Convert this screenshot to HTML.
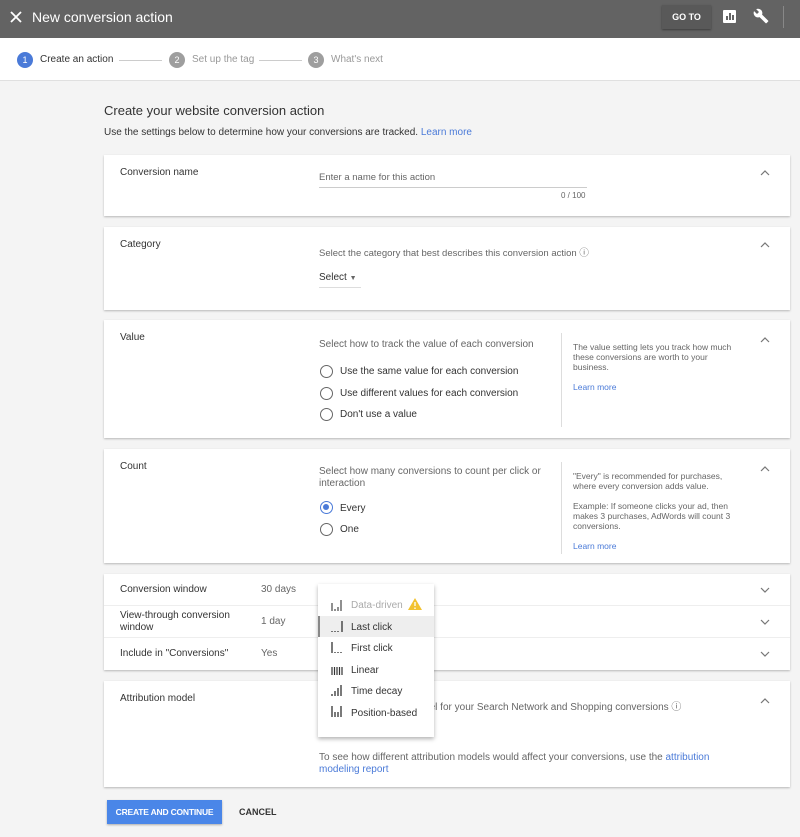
<!DOCTYPE html>
<html><head><style>
*{margin:0;padding:0;box-sizing:border-box}
body{width:800px;height:837px;background:#f4f4f4;font-family:"Liberation Sans",sans-serif;position:relative;overflow:hidden;color:#333}
.a{position:absolute;white-space:nowrap}
.card{position:absolute;left:104px;width:686px;background:#fff;box-shadow:0 1px 2px rgba(0,0,0,.25)}
.t{font-size:10px;color:#333}
.g{font-size:10px;color:#666}
.chev{position:absolute;right:20px}
.radio{position:absolute;width:13px;height:13px;border:1.5px solid #666;border-radius:50%}
.link{color:#4a7ad8}
.side{position:absolute;left:457px;border-left:1px solid #ddd;padding-left:11px;font-size:8.5px;color:#666;line-height:10px;white-space:normal;width:180px}
</style></head><body>
<div class="a" style="left:0;top:0;width:800px;height:38px;background:#636363;box-shadow:0 1px 3px rgba(0,0,0,.4)"></div>
<svg class="a" style="left:10px;top:11px" width="12" height="12" viewBox="0 0 12 12"><path d="M1 1L11 11M11 1L1 11" stroke="#fff" stroke-width="1.8"/></svg>
<div class="a" style="left:32px;top:9px;color:#fff;font-size:14px">New conversion action</div>
<div class="a" style="left:662px;top:5px;width:49px;height:24px;background:#595959;box-shadow:0 1px 2px rgba(0,0,0,.4);color:#fff;font-size:9px;font-weight:bold;text-align:center;line-height:24px">GO TO</div>
<div class="a" style="left:723px;top:10px;width:13px;height:13px;background:#fff;border-radius:1px"><div style="position:absolute;left:3px;top:6px;width:1.5px;height:4px;background:#636363"></div><div style="position:absolute;left:6px;top:3px;width:1.5px;height:7px;background:#636363"></div><div style="position:absolute;left:9px;top:5px;width:1.5px;height:5px;background:#636363"></div></div>
<svg class="a" style="left:753px;top:8px" width="16" height="16" viewBox="0 0 24 24"><path fill="#fff" d="M22.7 19l-9.1-9.1c.9-2.3.4-5-1.5-6.9-2-2-5-2.4-7.4-1.3L9 6 6 9 1.6 4.7C.4 7.1.9 10.1 2.9 12.1c1.9 1.9 4.6 2.4 6.9 1.5l9.1 9.1c.4.4 1 .4 1.4 0l2.3-2.3c.5-.4.5-1.1.1-1.4z"/></svg>
<div class="a" style="left:783px;top:6px;width:1px;height:22px;background:#888"></div>
<div class="a" style="left:0;top:38px;width:800px;height:43px;background:#fff;border-bottom:1px solid #e0e0e0"></div>
<div class="a" style="left:17px;top:52px;width:16px;height:16px;border-radius:50%;background:#4a7ad8;color:#fff;font-size:9px;text-align:center;line-height:16px">1</div>
<div class="a t" style="left:40px;top:54px">Create an action</div>
<div class="a" style="left:119px;top:60px;width:43px;height:1px;background:#ccc"></div>
<div class="a" style="left:169px;top:52px;width:16px;height:16px;border-radius:50%;background:#9e9e9e;color:#fff;font-size:9px;text-align:center;line-height:16px">2</div>
<div class="a" style="left:192px;top:54px;font-size:10px;color:#999">Set up the tag</div>
<div class="a" style="left:259px;top:60px;width:43px;height:1px;background:#ccc"></div>
<div class="a" style="left:308px;top:52px;width:16px;height:16px;border-radius:50%;background:#9e9e9e;color:#fff;font-size:9px;text-align:center;line-height:16px">3</div>
<div class="a" style="left:331px;top:54px;font-size:10px;color:#999">What's next</div>

<div class="a" style="left:104px;top:103px;font-size:13px;color:#333">Create your website conversion action</div>
<div class="a t" style="left:104px;top:127px">Use the settings below to determine how your conversions are tracked. <span class="link">Learn more</span></div>

<div class="card" style="top:155px;height:61px">
<div class="a t" style="left:16px;top:12px">Conversion name</div>
<div class="a g" style="left:215px;top:17px;font-size:9.5px">Enter a name for this action</div>
<div class="a" style="left:215px;top:32px;width:268px;height:1px;background:#ccc"></div>
<div class="a g" style="left:457px;top:36px;font-size:8px">0 / 100</div>
<svg class="chev" style="top:15px" width="10" height="6"><path d="M1 5L5 1L9 5" stroke="#777" fill="none" stroke-width="1.2"/></svg>
</div>

<div class="card" style="top:227px;height:83px">
<div class="a t" style="left:16px;top:12px">Category</div>
<div class="a g" style="left:215px;top:18px;font-size:9.5px">Select the category that best describes this conversion action ⓘ</div>
<div class="a t" style="left:215px;top:45px">Select <span style="font-size:7px;color:#666">▼</span></div>
<div class="a" style="left:215px;top:60px;width:42px;height:1px;background:#ddd"></div>
<svg class="chev" style="top:15px" width="10" height="6"><path d="M1 5L5 1L9 5" stroke="#777" fill="none" stroke-width="1.2"/></svg>
</div>

<div class="card" style="top:320px;height:118px">
<div class="a t" style="left:16px;top:12px">Value</div>
<div class="a g" style="left:215px;top:19px">Select how to track the value of each conversion</div>
<div class="radio" style="left:216px;top:45px"></div><div class="a t" style="left:236px;top:46px">Use the same value for each conversion</div>
<div class="radio" style="left:216px;top:67px"></div><div class="a t" style="left:236px;top:68px">Use different values for each conversion</div>
<div class="radio" style="left:216px;top:88px"></div><div class="a t" style="left:236px;top:89px">Don't use a value</div>
<div class="side" style="top:13px;height:94px;padding-top:9px">The value setting lets you track how much these conversions are worth to your business.<br><br><span class="link">Learn more</span></div>
<svg class="chev" style="top:17px" width="10" height="6"><path d="M1 5L5 1L9 5" stroke="#777" fill="none" stroke-width="1.2"/></svg>
</div>

<div class="card" style="top:449px;height:114px">
<div class="a t" style="left:16px;top:12px">Count</div>
<div class="a g" style="left:215px;top:17px;white-space:normal;width:240px;line-height:12px">Select how many conversions to count per click or interaction</div>
<div class="radio" style="left:216px;top:52px;border-color:#4a7ad8"><div style="position:absolute;left:2px;top:2px;width:6px;height:6px;border-radius:50%;background:#4a7ad8"></div></div><div class="a t" style="left:236px;top:54px">Every</div>
<div class="radio" style="left:216px;top:74px"></div><div class="a t" style="left:236px;top:75px">One</div>
<div class="side" style="top:13px;height:92px;padding-top:9px">"Every" is recommended for purchases, where every conversion adds value.<br><br>Example: If someone clicks your ad, then makes 3 purchases, AdWords will count 3 conversions.<br><br><span class="link">Learn more</span></div>
<svg class="chev" style="top:17px" width="10" height="6"><path d="M1 5L5 1L9 5" stroke="#777" fill="none" stroke-width="1.2"/></svg>
</div>

<div class="card" style="top:574px;height:96px">
<div class="a t" style="left:16px;top:10px">Conversion window</div><div class="a g" style="left:157px;top:10px">30 days</div><svg class="chev" style="top:13px" width="10" height="6"><path d="M1 1L5 5L9 1" stroke="#777" fill="none" stroke-width="1.2"/></svg>
<div class="a" style="left:0;top:31px;width:686px;height:1px;background:#eee"></div>
<div class="a t" style="left:16px;top:36px;line-height:12px">View-through conversion<br>window</div><div class="a g" style="left:157px;top:42px">1 day</div><svg class="chev" style="top:45px" width="10" height="6"><path d="M1 1L5 5L9 1" stroke="#777" fill="none" stroke-width="1.2"/></svg>
<div class="a" style="left:0;top:63px;width:686px;height:1px;background:#eee"></div>
<div class="a t" style="left:16px;top:74px">Include in "Conversions"</div><div class="a g" style="left:157px;top:74px">Yes</div><svg class="chev" style="top:77px" width="10" height="6"><path d="M1 1L5 5L9 1" stroke="#777" fill="none" stroke-width="1.2"/></svg>
</div>

<div class="card" style="top:681px;height:106px">
<div class="a t" style="left:16px;top:12px">Attribution model</div>
<div class="a g" style="left:215px;top:17px">Select an attribution model for your Search Network and Shopping conversions ⓘ</div>
<div class="a g" style="left:215px;top:71px;line-height:12px">To see how different attribution models would affect your conversions, use the <span class="link">attribution</span><br><span class="link">modeling report</span></div>
<svg class="chev" style="top:17px" width="10" height="6"><path d="M1 5L5 1L9 5" stroke="#777" fill="none" stroke-width="1.2"/></svg>
</div>

<div class="a" style="left:318px;top:584px;width:116px;height:153px;background:#fff;box-shadow:0 2px 4px rgba(0,0,0,.3)">
<div class="a" style="left:0;top:32px;width:116px;height:21px;background:#eee;border-left:2px solid #888"></div>
<svg class="a" style="left:13px;top:15px" width="13" height="12"><path d="M1 4V12M4 10V12M7 8V12M10 1V12" stroke="#555" stroke-width="1.3"/></svg>
<div class="a" style="left:33px;top:16px;font-size:10px;color:#aaa">Data-driven</div>
<svg class="a" style="left:90px;top:14px" width="14" height="12"><path d="M7 0L14 12H0Z" fill="#f2c230"/><path d="M7 4V8M7 9.5V11" stroke="#fff" stroke-width="1.3"/></svg>
<svg class="a" style="left:13px;top:36px" width="13" height="12"><path d="M1 11V12M4 11V12M7 11V12M11 1V12" stroke="#333" stroke-width="1.3"/></svg><div class="a t" style="left:33px;top:38px">Last click</div>
<svg class="a" style="left:13px;top:57px" width="13" height="12"><path d="M1 1V12M4 11V12M7 11V12M10 11V12" stroke="#333" stroke-width="1.3"/></svg><div class="a t" style="left:33px;top:59px">First click</div>
<svg class="a" style="left:13px;top:79px" width="13" height="12"><path d="M1 4V12M3.5 4V12M6 4V12M8.5 4V12M11 4V12" stroke="#333" stroke-width="1.2"/></svg><div class="a t" style="left:33px;top:81px">Linear</div>
<svg class="a" style="left:13px;top:100px" width="13" height="12"><path d="M1 10V12M4 7V12M7 4V12M10 1V12" stroke="#333" stroke-width="1.3"/></svg><div class="a t" style="left:33px;top:102px">Time decay</div>
<svg class="a" style="left:13px;top:121px" width="13" height="12"><path d="M1 1V12M4 7V12M7 7V12M10 1V12" stroke="#333" stroke-width="1.3"/></svg><div class="a t" style="left:33px;top:124px">Position-based</div>
</div>

<div class="a" style="left:107px;top:800px;width:115px;height:24px;background:#4a86e8;box-shadow:0 1px 2px rgba(0,0,0,.3);color:#fff;font-size:8.5px;font-weight:bold;text-align:center;line-height:24px;letter-spacing:-0.2px">CREATE AND CONTINUE</div>
<div class="a" style="left:239px;top:807px;font-size:9px;font-weight:bold;color:#333">CANCEL</div>
</body></html>
